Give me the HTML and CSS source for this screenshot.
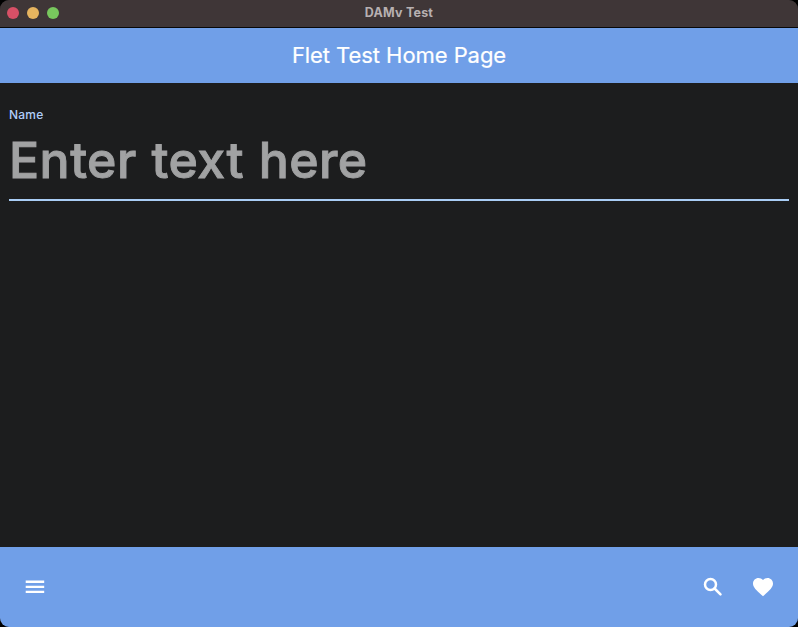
FILE: index.html
```html
<!DOCTYPE html>
<html lang="en">
<head>
<meta charset="utf-8">
<title>DAMv Test</title>
<link rel="stylesheet" href="styles.css">
</head>
<body>
<div class="window">
  <header class="titlebar">
    <div class="controls"><span class="dot close"></span><span class="dot minimize"></span><span class="dot zoom"></span></div>
    <span class="window-title">DAMv Test</span>
  </header>
  <div class="appbar"><h1>Flet Test Home Page</h1></div>
  <main class="content">
    <label class="label" for="name">Name</label>
    <input class="field" id="name" type="text" placeholder="Enter text here">
  </main>
  <footer class="bottombar">
    <svg class="icon" viewBox="0 0 24 24"><path d="M2.7 5.6h18.5v2.3H2.7zM2.7 10.7h18.5V13H2.7zM2.7 15.7h18.5V18H2.7z"/></svg>
    <div class="actions">
      <svg class="icon search" viewBox="0 0 24 24"><circle cx="9.5" cy="9.4" r="5.5"/><path d="M13.6 13.5l5.9 5.9"/></svg>
      <svg class="icon" viewBox="0 0 24 24"><path d="M12 21.35l-1.45-1.32C5.4 15.36 2 12.28 2 8.5 2 5.42 4.42 3 7.5 3c1.74 0 3.41.81 4.5 2.09C13.09 3.81 14.76 3 16.5 3 19.58 3 22 5.42 22 8.5c0 3.78-3.4 6.86-8.55 11.54L12 21.35z"/></svg>
    </div>
  </footer>
</div>
</body>
</html>
```
FILE: styles.css
```css
* { box-sizing: border-box; }
body { margin: 0; background: #000; font-family: Inter, sans-serif; }
.window { height: 627px; display: flex; flex-direction: column; overflow: hidden; border-radius: 9px; background: #1c1d1e; }
.titlebar { height: 28px; display: grid; grid-template-columns: 1fr auto 1fr; align-items: center; padding: 0 7px 1px; background: #3f3637; border-bottom: 1px solid #080808; }
.controls { display: flex; gap: 8px; }
.dot { width: 12px; height: 12px; border-radius: 50%; }
.close { background: #d75066; }
.minimize { background: #e6b45f; }
.zoom { background: #78c75d; }
.window-title { padding-bottom: 2px; font-size: 12.5px; font-weight: 700; letter-spacing: .2px; color: #b7b0b1; }
.appbar { height: 55px; display: flex; align-items: center; justify-content: center; padding-bottom: 2px; background: #709fe8; }
h1 { margin: 0; font-size: 22px; font-weight: 400; letter-spacing: -.06px; color: #fff; -webkit-text-stroke: .2px #fff; }
.content { flex: 1; display: flex; flex-direction: column; padding: 24px 9px 0; }
.label { height: 16px; line-height: 16px; font-size: 12px; font-weight: 500; letter-spacing: .2px; color: #b0cdfa; }
.field { height: 78px; width: 100%; padding: 0 0 3px; border: 0; border-bottom: 2px solid #a9cdf5; outline: 0; background: transparent; color: #e3e3e3; font: 500 50px Inter, sans-serif; letter-spacing: .45px; word-spacing: 1px; -webkit-text-stroke: .9px #a1a2a3; }
.field::placeholder { color: #a1a2a3; opacity: 1; }
.bottombar { height: 80px; display: flex; align-items: center; justify-content: space-between; padding: 0 23px; background: #709fe8; }
.actions { display: flex; gap: 26px; }
.icon { width: 24px; height: 24px; fill: #fff; display: block; }
.search { fill: none; stroke: #fff; stroke-width: 2.5; stroke-linecap: round; }
```
